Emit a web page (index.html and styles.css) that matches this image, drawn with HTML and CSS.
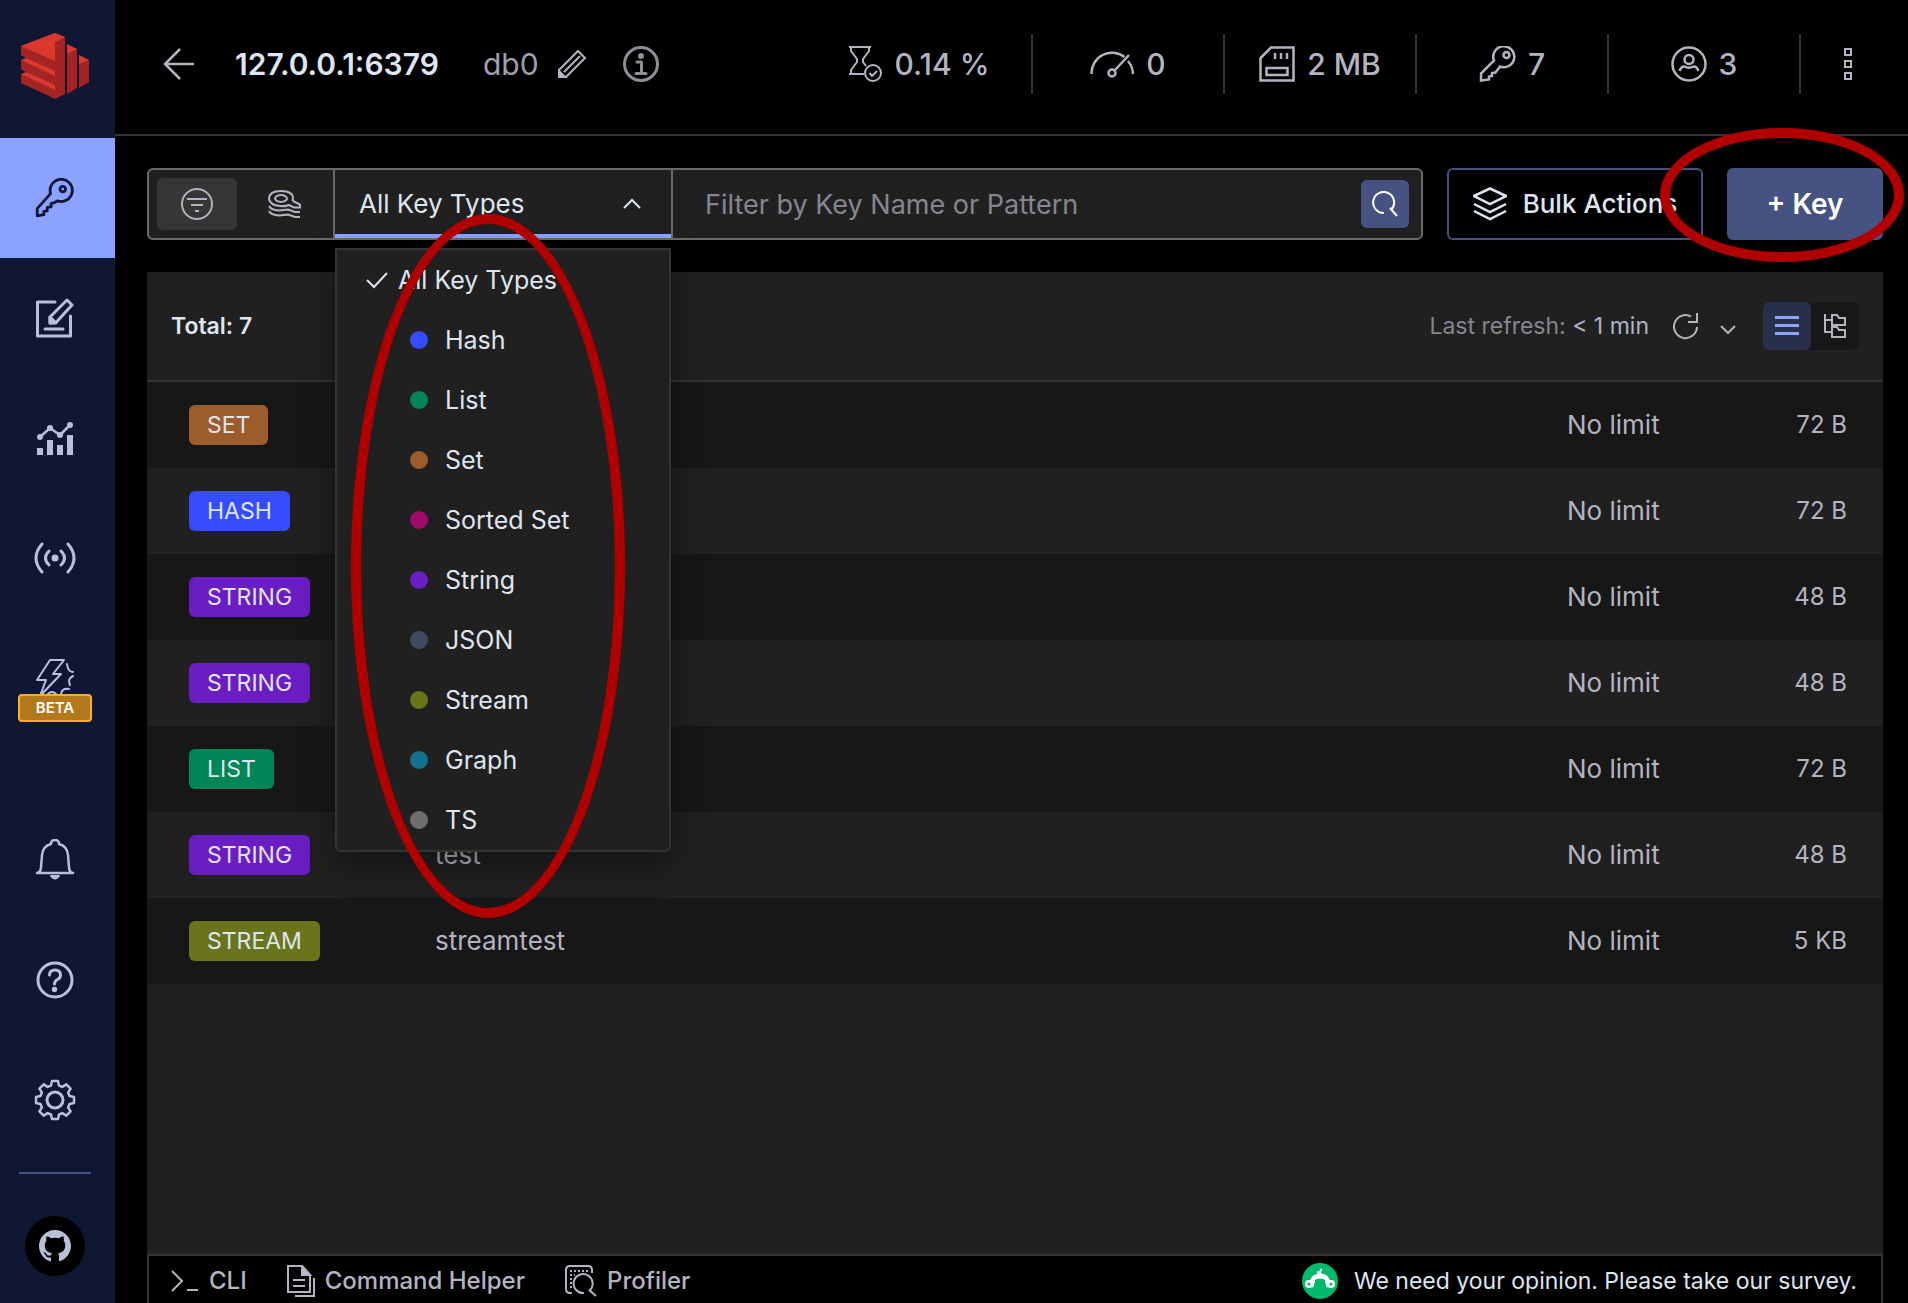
FILE: index.html
```html
<!DOCTYPE html>
<html lang="en">
<head>
<meta charset="utf-8">
<title>Redis browser</title>
<link rel="stylesheet" href="styles.css">
</head>
<body>
<div class="app">
  <nav class="sidebar" aria-label="Main">
    <a class="logo" href="#" aria-label="Home">
      <svg width="68" height="66" viewBox="0 0 68 66">
        <path fill="#a32422" d="M0 13v37l34 16 10-5V4L34 0z"/>
        <path fill="#dc382c" d="M0 13 34 0l10 4-10 5v19z"/>
        <path fill="#dc382c" d="M0 27l5-2 29 13v5zM0 41l5-2 29 13v5z"/>
        <path fill="#0f1733" d="M0 22l5 3-5 2zM0 36l5 3-5 2z"/>
        <path fill="#a32422" d="M46 12v49l10-6V16zM58 23v32l10-6V27z"/>
        <path fill="#dc382c" d="M46 11l10 5-10 5zM58 22l10 5-10 4z"/>
      </svg>
    </a>
    <a class="nav-item active" href="#" aria-label="Browser">
      <svg width="40" height="40" viewBox="0 0 36 36" class="line dark"><path d="M20 20.500a10 10 0 1 0-6-6.500L2 27.500V34l6-1v-3l3-.5v-3l3.500-.5v-3l3.500-1z"/><circle cx="25" cy="10" r="2.500"/></svg>
    </a>
    <a class="nav-item" href="#" aria-label="Workbench">
      <svg width="40" height="40" viewBox="0 0 40 40" class="line"><path d="M20 4H2.500v34h33V18M10 31h18"/><path d="M15 25v-6L32 2l5 5-16 17.500z"/><path class="solid" d="M15 19l6 6h-6z"/></svg>
    </a>
    <a class="nav-item" href="#" aria-label="Analysis">
      <svg width="40" height="40" viewBox="0 0 40 40"><path fill="none" stroke="#b9c0d8" stroke-width="2.500" d="M5 19l10-9 10 7L35 7"/><g fill="#b9c0d8"><circle cx="5" cy="19" r="3"/><circle cx="15" cy="10" r="3"/><circle cx="25" cy="17" r="3"/><circle cx="35" cy="7" r="3"/><path d="M2 30h6v7H2zM12 22h6v15h-6zM22 27h6v10h-6zM32 17h6v20h-6z"/></g></svg>
    </a>
    <a class="nav-item" href="#" aria-label="Pub/Sub">
      <svg width="42" height="40" viewBox="0 0 42 40" class="line"><path d="M8 6q-12 14 0 28M34 6q12 14 0 28M15 13q-7 7 0 14M27 13q7 7 0 14"/><circle class="solid" cx="21" cy="20" r="2"/></svg>
    </a>
    <a class="nav-item" href="#" aria-label="Triggers and functions">
      <svg width="40" height="40" viewBox="0 0 40 40" class="line thin"><path d="M15 2h14L18 16h8L5 38l6-16H2zM32 6q1 8 6 8M38 18q-6 3-3 9M26 36q1-6 8-5M13 36q4-4 8 0"/></svg>
      <span class="beta">BETA</span>
    </a>
    <div class="nav-spacer"></div>
    <a class="nav-item" href="#" aria-label="Notifications">
      <svg width="40" height="42" viewBox="0 0 40 42" class="line thin"><path d="M2 34q4-1 4-6l1-12q1-9 9-11 0-4 4-4t4 4q8 2 9 11l1 12q0 5 4 6M2 34h36" stroke-width="2.500"/><path class="solid" d="M16 37h8q-4 5-8 0z"/></svg>
    </a>
    <a class="nav-item" href="#" aria-label="Help">
      <svg width="40" height="40" viewBox="0 0 40 40" class="line"><circle cx="20" cy="20" r="17"/><path d="M14.500 15q0-5 5.500-5t5.500 5q0 3-3 4.500t-3 4.500"/><circle class="solid" cx="19.500" cy="29.500" r="1.200"/></svg>
    </a>
    <a class="nav-item" href="#" aria-label="Settings">
      <svg width="42" height="42" viewBox="-21 -21 42 42" class="line"><path d="M-4-14.500-3-19H3L4-14.500 7.400-13.100 11.300-15.600 15.600-11.300 13.100-7.400 14.500-4 19-3V3L14.500 4 13.100 7.400 15.600 11.300 11.300 15.600 7.400 13.100 4 14.500 3 19H-3L-4 14.500-7.400 13.100-11.300 15.600-15.600 11.300-13.100 7.400-14.500 4-19 3V-3L-14.500-4-13.100-7.400-15.600-11.300-11.300-15.600-7.400-13.100z" stroke-width="2.500"/><circle r="8"/></svg>
    </a>
    <div class="nav-line"></div>
    <a class="github" href="#" aria-label="GitHub">
      <svg width="32" height="32" viewBox="0 0 16 16"><path fill="#b9c0d8" d="M8 0C3.580 0 0 3.580 0 8c0 3.540 2.290 6.530 5.470 7.590.4.070.55-.17.55-.38 0-.19-.01-.82-.01-1.490-2.010.37-2.530-.49-2.690-.94-.09-.23-.48-.94-.82-1.130-.28-.15-.68-.52-.01-.53.63-.01 1.080.58 1.230.82.72 1.210 1.870.87 2.330.66.07-.52.28-.87.51-1.070-1.780-.2-3.640-.89-3.640-3.950 0-.87.31-1.590.82-2.150-.08-.2-.36-1.020.08-2.120 0 0 .67-.21 2.200.82.64-.18 1.320-.27 2-.27s1.360.09 2 .27c1.530-1.040 2.200-.82 2.200-.82.44 1.100.16 1.920.08 2.120.51.56.82 1.270.82 2.150 0 3.070-1.870 3.750-3.650 3.950.29.25.54.73.54 1.480 0 1.070-.01 1.930-.01 2.200 0 .21.15.46.55.38A8.010 8.010 0 0 0 16 8c0-4.420-3.580-8-8-8z"/></svg>
    </a>
  </nav>

  <div class="main">
    <header class="topbar">
      <button class="icon-btn back" aria-label="Back"><svg width="32" height="36" viewBox="0 0 32 36" class="line gray"><path d="M31 18H2M17 3L2 18l15 15"/></svg></button>
      <h1 class="host">127.0.0.1:6379</h1>
      <span class="db">db0</span>
      <button class="icon-btn edit" aria-label="Edit"><svg width="30" height="30" viewBox="0 0 30 30" class="line gray thin"><path d="M2 28v-7L21 2l7 7L9 28zM7 23L23 7"/><path class="solid" d="M2 22l6 6H2z"/></svg></button>
      <button class="icon-btn info" aria-label="Info"><svg width="36" height="36" viewBox="0 0 36 36" class="line dim"><circle cx="18" cy="18" r="16.500"/><path d="M14 16h4.500v11M13 27.500h10"/><circle class="solid" cx="18" cy="10" r="1.500"/></svg></button>
      <ul class="stats">
        <li><svg width="34" height="36" viewBox="0 0 34 36" class="line gray thin"><path d="M0 1h22M2 1v4l6 8v3L2 24v4M20 1v4l-6 8v3l3 4M2 24v4H0h15"/><circle cx="24" cy="27" r="8"/><path d="M20.500 27l2.500 3 5-5"/></svg>0.14 %</li>
        <li><svg width="44" height="36" viewBox="0 0 44 36" class="line gray"><path d="M1.500 28a20.500 20.500 0 0 1 33-17M38 15q5 6 5 13M39 9L25 24"/><circle cx="22" cy="27" r="3.500"/></svg>0</li>
        <li><svg width="36" height="36" viewBox="0 0 36 36" class="line gray"><path d="M12 1.500h22.500v33h-33V12zM7.500 22h21v7h-21zM16 7v6M22 7v6M28 7v6"/></svg>2 MB</li>
        <li><svg width="37" height="36" viewBox="0 0 37 36" class="line gray"><path d="M21 20.500a10.500 10.500 0 1 0-6-6L2 27.500V34.500l8-1v-3l3-.5v-3l3.500-.5z"/><circle cx="27.500" cy="9" r="3"/></svg>7</li>
        <li><svg width="36" height="36" viewBox="0 0 36 36" class="line gray"><circle cx="18" cy="18" r="16.500"/><circle cx="18" cy="13.500" r="4.500"/><path d="M8.500 25q2-5 5-4.500 4 2.500 9 0 3-.5 5 4.500"/></svg>3</li>
      </ul>
      <button class="icon-btn kebab" aria-label="More"><svg width="8" height="32" viewBox="0 0 8 32"><path fill="none" stroke="#b4b4c0" stroke-width="2" d="M1 1h6v6H1zM1 13h6v6H1zM1 25h6v6H1z"/></svg></button>
    </header>

    <main class="content">
      <div class="toolbar">
        <div class="search">
          <div class="modes">
            <button class="mode on" aria-label="Filter"><svg width="32" height="32" viewBox="0 0 32 32" class="line gray thin"><circle cx="16" cy="16" r="15"/><path d="M6 11h20M10 17h12M14 23h4"/></svg></button>
            <button class="mode" aria-label="Search index"><svg width="34" height="28" viewBox="0 0 34 28" class="line gray thin"><path d="M25 11l7 3.500v3h-6l-5-2.500q-4 1.500-9 1-10-1-11-7Q1 1 13 1t12 7.500q0 1.500-1 2.500"/><ellipse cx="13" cy="8.500" rx="6" ry="3.500"/><path d="M1 16q2 4 10 4.500l9-1 7 2.500h5M1 21q2 4 10 4.500l9-1 7 2.500h5"/></svg></button>
          </div>
          <div class="type-filter">
            <select class="type-select" aria-label="Key type"><option>All Key Types</option></select>
            <svg class="caret" width="18" height="12" viewBox="0 0 18 12"><path d="M1 10l8-8 8 8"/></svg>
            <ul class="menu" role="listbox" aria-label="Key types">
              <li role="option" aria-selected="true" class="chosen"><svg width="22" height="18" viewBox="0 0 22 18"><path d="M1 9l7 7L21 2"/></svg>All Key Types</li>
              <li role="option"><i class="dot hash"></i>Hash</li>
              <li role="option"><i class="dot list"></i>List</li>
              <li role="option"><i class="dot set"></i>Set</li>
              <li role="option"><i class="dot zset"></i>Sorted Set</li>
              <li role="option"><i class="dot string"></i>String</li>
              <li role="option"><i class="dot json"></i>JSON</li>
              <li role="option"><i class="dot stream"></i>Stream</li>
              <li role="option"><i class="dot graph"></i>Graph</li>
              <li role="option"><i class="dot ts"></i>TS</li>
            </ul>
            <span class="ring ring-types"></span>
          </div>
          <input class="pattern" type="text" placeholder="Filter by Key Name or Pattern" aria-label="Filter by Key Name or Pattern">
          <button class="go" aria-label="Search"><svg width="26" height="26" viewBox="0 0 26 26"><path d="M12 22A10.500 10.500 0 1 1 19 19M18 17l7 8"/></svg></button>
        </div>
        <button class="bulk"><svg width="34" height="34" viewBox="0 0 34 34"><path d="M17 1.500L33 9 17 17 1 9zM1 17l16 8 16-8M1 24l16 8 16-8"/></svg>Bulk Actions</button>
        <div class="add-wrap">
          <button class="add">+ Key</button>
          <span class="ring ring-add"></span>
        </div>
      </div>

      <section class="panel">
        <div class="panel-head">
          <strong class="total">Total: 7</strong>
          <span class="refresh">Last refresh: <b>&lt; 1 min</b></span>
          <button class="icon-btn reload" aria-label="Refresh"><svg width="26" height="28" viewBox="0 0 26 28" class="line gray thin"><path d="M24 15A11.500 11.500 0 1 1 18 4.500M24 1v9h-9"/></svg></button>
          <button class="icon-btn more" aria-label="Auto refresh"><svg width="16" height="10" viewBox="0 0 16 10" class="line gray thin"><path d="M1 1l7 7 7-7"/></svg></button>
          <div class="views">
            <button class="view on" aria-label="List view"><svg width="24" height="20" viewBox="0 0 24 20"><path fill="#8ba2ff" d="M0 0h24v3H0zM0 8h24v3H0zM0 16h24v3H0z"/></svg></button>
            <button class="view" aria-label="Tree view"><svg width="24" height="26" viewBox="0 0 24 26" class="line gray thin"><path d="M2 1v18h7M2 7h7M9 2h5l2 3h6v7H9zM9 14h5l2 3h6v7H9z"/></svg></button>
          </div>
        </div>
        <table class="keys" aria-label="Keys">
          <tbody>
            <tr><td class="c-type"><span class="tag set">SET</span></td><td class="c-name"></td><td class="c-ttl">No limit</td><td class="c-size">72 B</td></tr>
            <tr><td class="c-type"><span class="tag hash">HASH</span></td><td class="c-name"></td><td class="c-ttl">No limit</td><td class="c-size">72 B</td></tr>
            <tr><td class="c-type"><span class="tag string">STRING</span></td><td class="c-name"></td><td class="c-ttl">No limit</td><td class="c-size">48 B</td></tr>
            <tr><td class="c-type"><span class="tag string">STRING</span></td><td class="c-name"></td><td class="c-ttl">No limit</td><td class="c-size">48 B</td></tr>
            <tr><td class="c-type"><span class="tag list">LIST</span></td><td class="c-name"></td><td class="c-ttl">No limit</td><td class="c-size">72 B</td></tr>
            <tr><td class="c-type"><span class="tag string">STRING</span></td><td class="c-name">test</td><td class="c-ttl">No limit</td><td class="c-size">48 B</td></tr>
            <tr><td class="c-type"><span class="tag stream">STREAM</span></td><td class="c-name">streamtest</td><td class="c-ttl">No limit</td><td class="c-size">5 KB</td></tr>
          </tbody>
        </table>
      </section>

      <footer class="dock">
        <button class="tool"><svg width="28" height="24" viewBox="0 0 28 24" class="line gray thin"><path d="M1 2l10 10L1 22M16 21h11"/></svg>CLI</button>
        <button class="tool"><svg width="28" height="32" viewBox="0 0 28 32" class="line gray thin"><path d="M1 1h14l8 9v17H1zM6 15h12M6 21h12M27 13v18H8"/><path class="solid" d="M15 1v9h8z"/></svg>Command Helper</button>
        <button class="tool"><svg width="32" height="32" viewBox="0 0 32 32" class="line gray thin"><path d="M7 28H5q-4 0-4-4V5q0-4 4-4h18q4 0 4 4v3M19 28a9.500 9.500 0 1 1 5-2M24 25l7 6"/><path d="M5 6h20M5 10h5M5 14h3M5 18h2M5 22h2" stroke-dasharray="2 2"/></svg>Profiler</button>
        <a class="survey" href="#"><svg width="36" height="36" viewBox="0 0 36 36"><circle cx="18" cy="18" r="18" fill="#00b96b"/><path fill="none" stroke="#fff" stroke-width="5" d="M9 24q1-11 9-11t9 11"/><path fill="none" stroke="#fff" stroke-width="2" d="M18 12q-1-3-3-3M18 11q0-4 2-5"/><g fill="#fff"><circle cx="7" cy="21" r="4"/><circle cx="29" cy="21" r="4"/></g><g fill="#00b96b"><circle cx="7" cy="21" r="1.500"/><circle cx="29" cy="21" r="1.500"/><path d="M13 17q3-2 5 0 2-2 5 0v3H13z"/></g></svg>We need your opinion. Please take our survey.</a>
      </footer>
    </main>
  </div>
</div>
</body>
</html>
```
FILE: styles.css
```css
* { box-sizing: border-box; }

body {
  margin: 0;
  background: #000;
  color: #dfe5ef;
  font-family: Inter, "Liberation Sans", sans-serif;
  font-size: 24px;
  line-height: 32px;
}

button, input, select { font: inherit; color: inherit; margin: 0; padding: 0; border: 0; background: none; }
ul { list-style: none; margin: 0; padding: 0; }
a { color: inherit; text-decoration: none; }
svg { display: block; flex: none; }

.line { fill: none; stroke: #b9c0d8; stroke-width: 3; stroke-linecap: round; stroke-linejoin: round; }
.line.gray { stroke: #b4b4c0; stroke-width: 2.5; stroke-linecap: butt; stroke-linejoin: miter; }
.line.dim { stroke: #8e8e96; }
.line.dark { stroke: #0f1733; stroke-width: 2.5; }
.line.thin { stroke-width: 2; }
.line .solid { fill: #b9c0d8; }
.line.dim .solid { fill: #8e8e96; }

.app { display: flex; min-height: 100vh; }

.sidebar {
  width: 115px;
  flex: none;
  display: flex;
  flex-direction: column;
  background: #0f1733;
}
.logo { height: 138px; padding: 33px 0 0 21px; }
.nav-item {
  position: relative;
  height: 120px;
  padding-right: 5px;
  display: flex;
  align-items: center;
  justify-content: center;
}
.nav-item.active { background: #8ba2ff; }
.beta {
  position: absolute;
  left: 18px;
  bottom: 16px;
  width: 74px;
  height: 28px;
  border: 2px solid #ffaf2b;
  border-radius: 4px;
  background: #b3781c;
  color: #fff;
  font-size: 15px;
  font-weight: 600;
  line-height: 24px;
  text-align: center;
}
.nav-spacer { flex: 1; }
.nav-line { height: 2px; margin: 12px 24px 42px 19px; background: #465282; }
.github {
  width: 60px;
  height: 60px;
  margin: 0 0 27px 25px;
  border-radius: 50%;
  background: #000;
  display: flex;
  align-items: center;
  justify-content: center;
}

.main { flex: 1; min-width: 0; display: flex; flex-direction: column; }

.topbar {
  height: 136px;
  padding: 0 56px 6px 48px;
  border-bottom: 2px solid #343434;
  display: flex;
  align-items: center;
}
.icon-btn { display: flex; align-items: center; justify-content: center; }
.host { margin: 0 0 0 40px; font-size: 30px; font-weight: 600; }
.db { margin-left: 44px; font-size: 30px; color: #a0a0ac; }
.edit { margin-left: 18px; }
.info { margin-left: 36px; }
.stats { margin-left: auto; display: flex; font-size: 30px; font-weight: 500; color: #b4b4c0; }
.stats li {
  width: 192px;
  height: 60px;
  display: flex;
  align-items: center;
  justify-content: center;
  gap: 12px;
  border-right: 2px solid #343434;
}
.stats li:first-child { width: 226px; }
.kebab { margin-left: 43px; }

.content { flex: 1; display: flex; flex-direction: column; padding: 32px 25px 0 32px; }

.toolbar { display: flex; gap: 24px; margin-bottom: 32px; }
.search {
  flex: 1;
  height: 72px;
  display: flex;
  align-items: center;
  border: 2px solid #6a6a6a;
  border-radius: 6px;
  background: #202020;
}
.modes { display: flex; gap: 8px; padding: 0 8px; }
.mode {
  width: 80px;
  height: 52px;
  border-radius: 6px;
  display: flex;
  align-items: center;
  justify-content: center;
}
.mode.on { background: #363636; }
.type-filter {
  position: relative;
  width: 340px;
  height: 68px;
  border: solid #6a6a6a;
  border-width: 0 2px;
}
.type-select {
  appearance: none;
  width: 100%;
  height: 68px;
  padding: 4px 24px 0;
  border-bottom: 4px solid #8ba2ff;
  font-size: 26px;
}
.caret { position: absolute; right: 30px; top: 28px; }
.caret path, .menu svg path { fill: none; stroke: #dfe5ef; stroke-width: 2; }
.menu {
  position: absolute;
  z-index: 2;
  left: 0;
  right: 0;
  top: 78px;
  border: 2px solid #343434;
  border-radius: 0 0 6px 6px;
  background: #202020;
  box-shadow: 0 12px 32px rgba(0, 0, 0, 0.4);
  font-size: 25px;
}
.menu li {
  height: 60px;
  padding-left: 73px;
  display: flex;
  align-items: center;
  gap: 17px;
}
.menu .chosen { padding-left: 29px; gap: 10px; }
.dot { width: 18px; height: 18px; border-radius: 50%; }
.ring {
  position: absolute;
  z-index: 3;
  border: 10px solid #b10000;
  border-radius: 50%;
  pointer-events: none;
}
.ring-types { left: 16px; top: 44px; width: 274px; height: 704px; }
.ring-add { left: -67px; top: -40px; width: 244px; height: 134px; }
.pattern { flex: 1; min-width: 0; height: 68px; padding: 0 32px; font-size: 27px; outline: 0; }
.pattern::placeholder { color: #868690; opacity: 1; }
.go {
  width: 48px;
  height: 48px;
  margin-right: 12px;
  border-radius: 6px;
  background: #465282;
  display: flex;
  align-items: center;
  justify-content: center;
}
.go path { fill: none; stroke: #fff; stroke-width: 2; }
.bulk {
  width: 256px;
  display: flex;
  align-items: center;
  justify-content: center;
  gap: 16px;
  border: 2px solid #465282;
  border-radius: 6px;
  font-size: 26px;
  font-weight: 500;
  white-space: nowrap;
}
.bulk path { fill: none; stroke: #dfe5ef; stroke-width: 2.5; }
.add-wrap { position: relative; width: 156px; }
.add {
  width: 100%;
  height: 72px;
  border-radius: 6px;
  background: #465282;
  color: #fff;
  font-size: 28px;
  font-weight: 600;
}

.panel { flex: 1; background: #202020; }
.panel-head {
  height: 110px;
  padding: 0 24px;
  border-bottom: 2px solid #343434;
  display: flex;
  align-items: center;
  font-size: 23px;
}
.total { font-weight: 600; }
.refresh { margin-left: auto; color: #868690; }
.refresh b { color: #b4b4c0; font-weight: 400; }
.reload { margin-left: 24px; }
.more { margin-left: 21px; padding-top: 8px; }
.views { display: flex; margin-left: 27px; border-radius: 6px; background: #171717; }
.view {
  width: 48px;
  height: 48px;
  border-radius: 6px;
  display: flex;
  align-items: center;
  justify-content: center;
}
.view.on { background: #292e4a; }

.keys { width: 100%; border-collapse: collapse; color: #b4b4c0; }
.keys tr { height: 86px; }
.keys tr:nth-child(odd) { background: #171717; }
.keys td { padding: 0; }
.c-type { width: 288px; }
.keys .c-type { padding-left: 42px; }
.c-name, .c-ttl { font-size: 26px; }
.c-ttl { width: 100px; white-space: nowrap; }
.keys .c-size { width: 216px; padding-right: 36px; text-align: right; }
.tag {
  display: inline-block;
  padding: 0 18px;
  border-radius: 6px;
  color: #dfe5ef;
  font-size: 23px;
  line-height: 40px;
  vertical-align: middle;
}
.hash { background: #364cff; }
.list { background: #008556; }
.set { background: #9c5c2b; }
.zset { background: #a00a6b; }
.string { background: #6a1dc3; }
.json { background: #3f4b5f; }
.stream { background: #6a741b; }
.graph { background: #14708d; }
.ts { background: #6e6e6e; }

.dock {
  height: 49px;
  padding: 2px 24px 0 22px;
  border: solid #343434;
  border-width: 2px 2px 0;
  display: flex;
  align-items: center;
  gap: 40px;
}
.tool { display: flex; align-items: center; gap: 10px; color: #b4b4c0; font-weight: 500; }
.survey { margin-left: auto; display: flex; align-items: center; gap: 16px; font-size: 23px; }
```
